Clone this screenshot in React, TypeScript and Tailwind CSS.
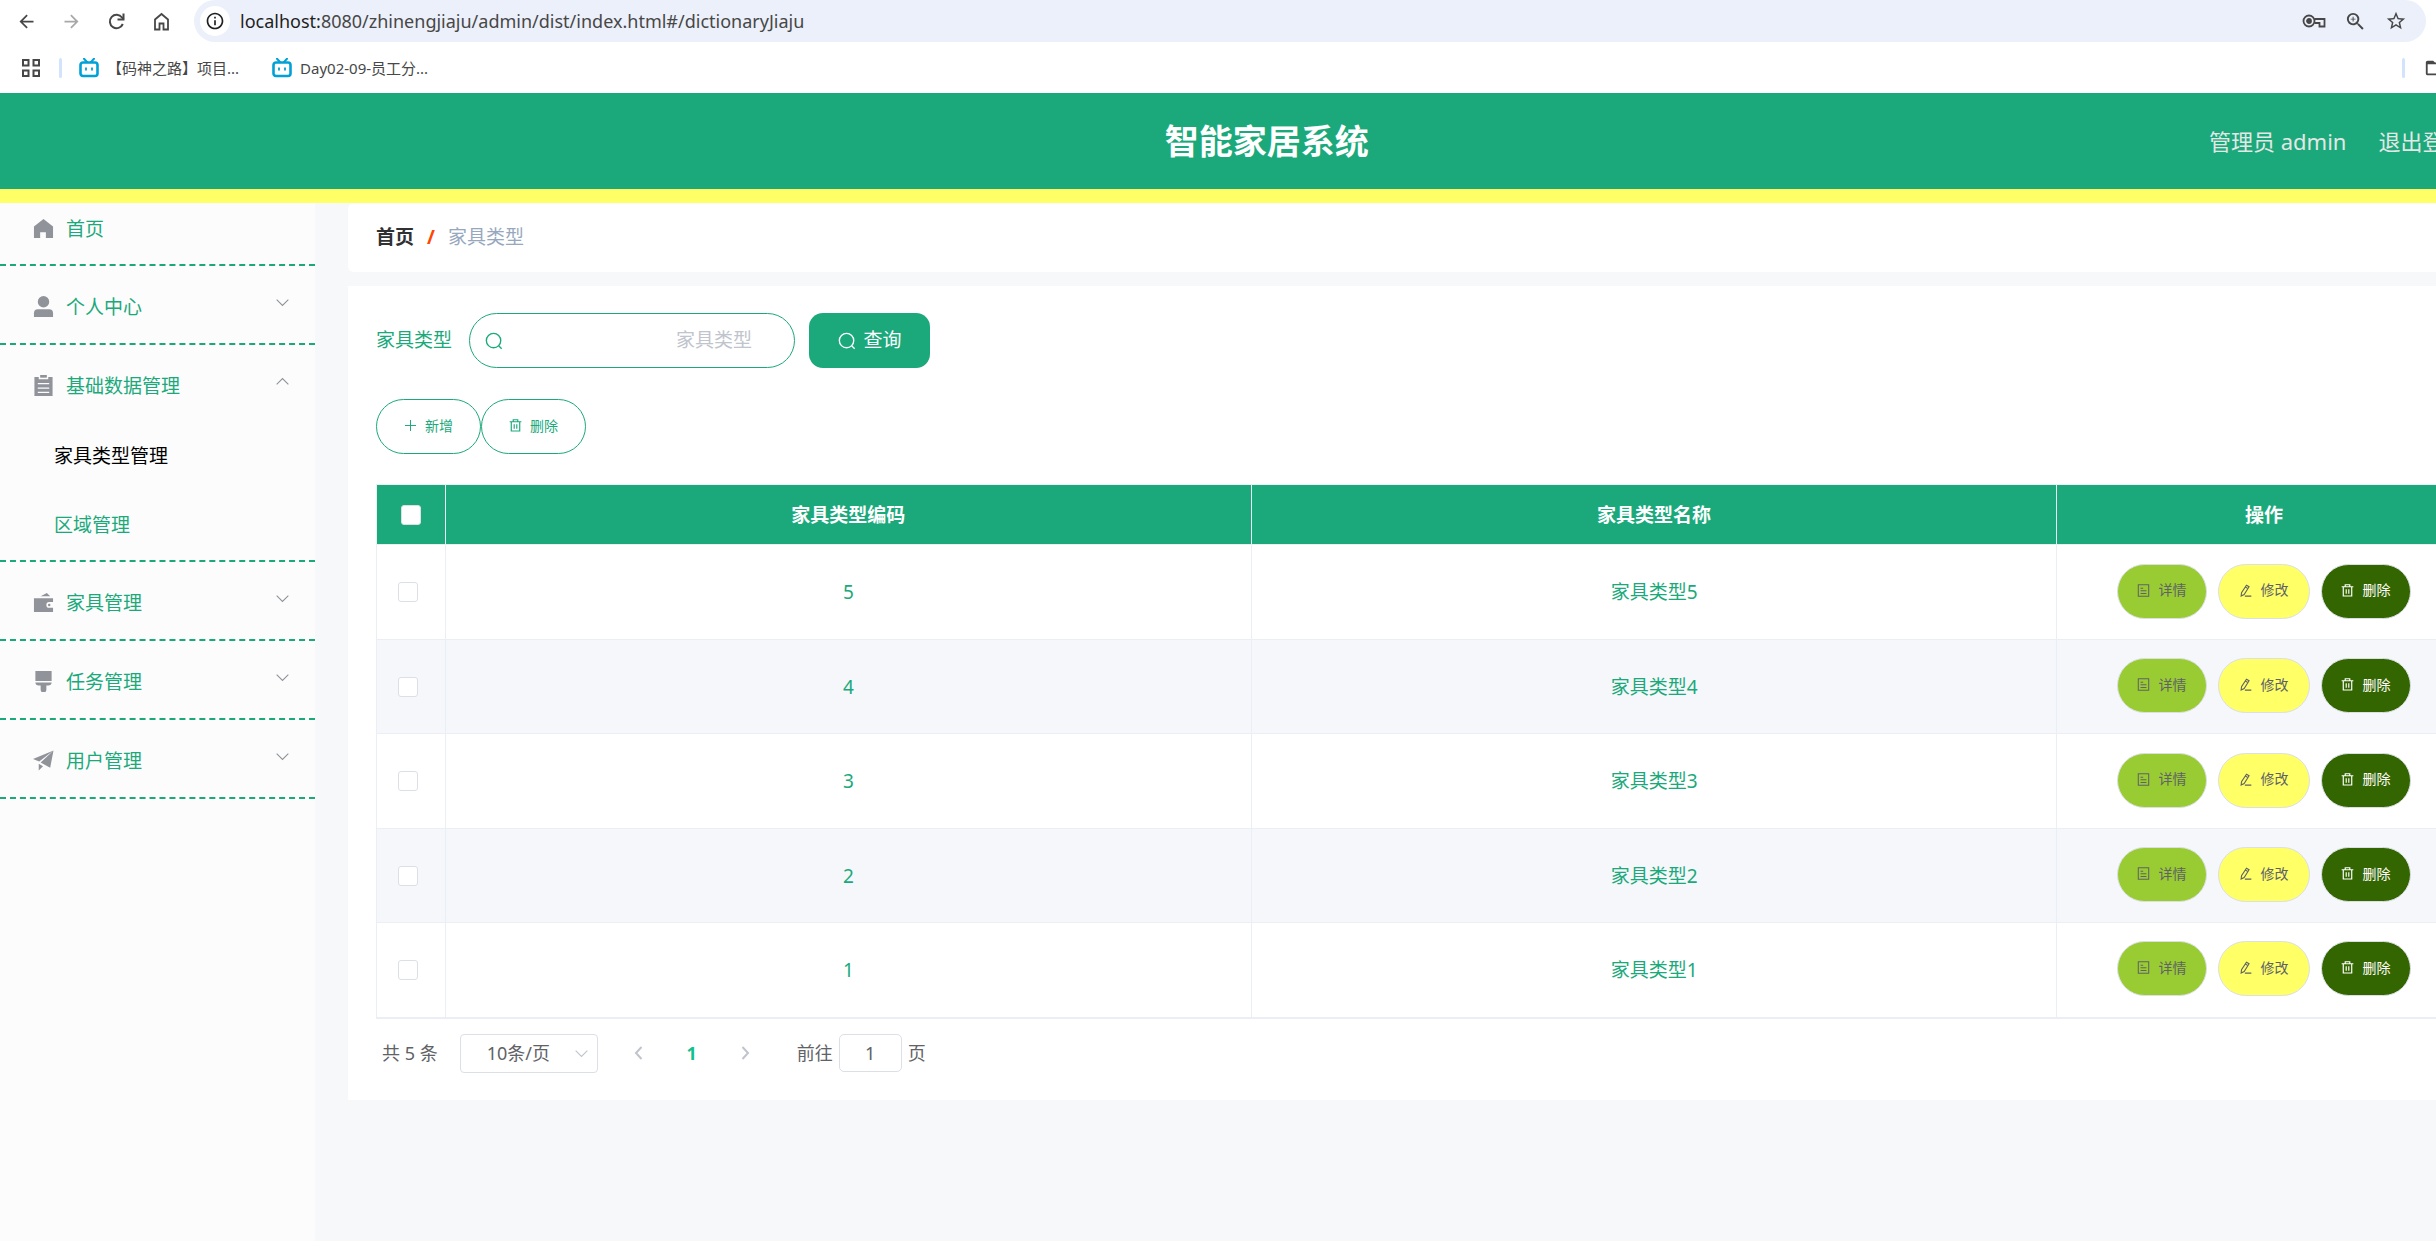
import { useState, type ReactNode } from 'react';
import {
  MdArrowBack,
  MdArrowForward,
  MdFolderOpen,
  MdInfoOutline,
  MdStarBorder,
  MdZoomIn,
} from 'react-icons/md';

/* ---------- icons ---------- */

type IconProps = { className?: string };

function Stroke({ className, children }: IconProps & { children: ReactNode }) {
  return (
    <svg
      viewBox="0 0 20 20"
      className={className}
      fill="none"
      stroke="currentColor"
      strokeWidth="1.5"
      aria-hidden="true"
    >
      {children}
    </svg>
  );
}

function Solid({ className, children }: IconProps & { children: ReactNode }) {
  return (
    <svg viewBox="0 0 22 22" className={className} fill="currentColor" aria-hidden="true">
      {children}
    </svg>
  );
}

const SearchIcon = ({ className }: IconProps) => (
  <Stroke className={className}>
    <circle cx="9.5" cy="9.5" r="8" />
    <path d="M15.2 15.2l3.3 3.3" />
  </Stroke>
);

const PlusIcon = ({ className }: IconProps) => (
  <Stroke className={className}>
    <path d="M10 1.5v17M1.5 10h17" />
  </Stroke>
);

const TrashIcon = ({ className }: IconProps) => (
  <Stroke className={className}>
    <path d="M1 4.2h18M6.5 4V1.2h7V4M3.5 4.5v14h13v-14M8 8v7M12 8v7" strokeWidth="1.8" />
  </Stroke>
);

const DocIcon = ({ className }: IconProps) => (
  <Stroke className={className}>
    <path d="M2 1h16v18H2zM5.5 6.5h4M5.5 10.5h9M5.5 14.5h9" strokeWidth="1.6" />
  </Stroke>
);

const EditIcon = ({ className }: IconProps) => (
  <Stroke className={className}>
    <path d="M11.5 1.8l4 2.4-7.6 12-4.6 2.3.6-5zM9.8 4.6l4 2.5M9 18.6h10" strokeWidth="1.7" />
  </Stroke>
);

const Chevron = ({ className }: IconProps) => (
  <Stroke className={className}>
    <path d="M1 5.5l9 9 9-9" strokeWidth="1.7" />
  </Stroke>
);

const HomeSolid = ({ className }: IconProps) => (
  <Solid className={className}>
    <path d="M11 1L1 9v12h6.5v-6h6v6H21V9z" />
  </Solid>
);

const UserSolid = ({ className }: IconProps) => (
  <Solid className={className}>
    <circle cx="11" cy="6" r="6" />
    <path d="M1 22v-4a4 4 0 0 1 4-4h12a4 4 0 0 1 4 4v4z" />
  </Solid>
);

const OrderSolid = ({ className }: IconProps) => (
  <Solid className={className}>
    <path fillRule="evenodd" d="M1.500 2H6v2.500h10V2h4.500v20h-19zM5 8.500v1.300h12V8.500zM5 13v1.300h12V13zM5 17.500v1.300h12v-1.300z" />
    <path d="M7.500 0h7v2.800h-7z" />
  </Solid>
);

const WalletSolid = ({ className }: IconProps) => (
  <Solid className={className}>
    <path d="M8 4.500L14.500 1l3.500 3.500z" />
    <path fillRule="evenodd" d="M1 6.500h20v4h-4a3 3 0 0 0 0 6h4V21H1z" />
    <circle cx="17" cy="13.500" r="1.300" />
  </Solid>
);

const BrushSolid = ({ className }: IconProps) => (
  <Solid className={className}>
    <path d="M2.500 0h17v10.500h-17zM2.500 12h17c0 2-1.500 3.200-3.500 3.200h-2V19.500a3 3 0 0 1-6 0v-4.300H6c-2 0-3.500-1.200-3.500-3.200z" />
  </Solid>
);

const PlaneSolid = ({ className }: IconProps) => (
  <Solid className={className}>
    <path d="M0 9.500L21.500 0.500 6.500 12zM21.500 0.500L18 18.500 8 13.200zM6 14.500l4.500 2.500L6 21.500z" />
  </Solid>
);

const BiliIcon = () => (
  <svg viewBox="0 0 20 20" className="size-5 text-[#00a1d6]" fill="none" stroke="currentColor" aria-hidden="true">
    <rect x="1.500" y="4.500" width="17" height="13.500" rx="2.500" strokeWidth="2.600" />
    <path d="M5 .8l3 3.200M15 .8l-3 3.200" strokeWidth="2" strokeLinecap="round" />
    <path d="M7 9.500v3M13 9.500v3" strokeWidth="1.800" />
  </svg>
);

/* ---------- browser chrome ---------- */

const bookmarks = ['【码神之路】项目...', 'Day02-09-员工分...'];

function BrowserBar() {
  return (
    <div className="bg-white text-[#474747]">
      <div className="flex h-[42px] items-center pl-4">
        <button type="button" aria-label="后退" className="mr-6">
          <MdArrowBack className="size-[21px]" />
        </button>
        <button type="button" aria-label="前进" className="mr-6 text-[#a8a8a8]">
          <MdArrowForward className="size-[21px]" />
        </button>
        <button type="button" aria-label="刷新" className="mr-6">
          <svg viewBox="0 0 21 21" className="size-[21px]" fill="none" stroke="currentColor" strokeWidth="2">
            <path d="M16.800 13a6.700 6.700 0 1 1-.8-6.500l1.500 1.800" />
            <path d="M17.500 2.500v6h-6" />
          </svg>
        </button>
        <button type="button" aria-label="主页" className="mr-[22px]">
          <svg viewBox="0 0 21 21" className="size-[21px]" fill="none" stroke="currentColor" strokeWidth="1.800">
            <path d="M4 18.500V8.500l6.500-5.500 6.500 5.500v10h-4.500V12.500h-4v6z" />
          </svg>
        </button>
        <div className="mr-[107px] flex h-full flex-1 items-center rounded-full bg-[#ecf0fa] pl-[6px] pr-[19px]">
          <span className="flex size-[30px] items-center justify-center rounded-full bg-white">
            <MdInfoOutline className="size-5 text-[#1f1f1f]" />
          </span>
          <a href="#/dictionaryJiaju" className="ml-[10px] flex-1 text-[18px] leading-6">
            <span className="text-[#1f1f1f]">localhost:</span>8080/zhinengjiaju/admin/dist/index.html#/dictionaryJiaju
          </a>
          <svg viewBox="0 0 24 16" className="mr-[18px] h-4 w-6" fill="none" stroke="currentColor" strokeWidth="1.800">
            <circle cx="7" cy="8" r="5.500" />
            <circle cx="7" cy="8" r="2" fill="currentColor" />
            <path d="M12.500 6H22.500v7.500h-5V10h-5" />
          </svg>
          <MdZoomIn className="mr-[18px] size-[23px]" />
          <MdStarBorder className="size-[22px]" />
        </div>
      </div>
      <div className="flex h-[51px] items-center pl-[22px] pr-[87px]">
        <svg viewBox="0 0 18 18" className="size-[18px]" fill="none" stroke="currentColor" strokeWidth="2">
          <path d="M1 1h5.500v5.500H1zM11.500 1H17v5.500h-5.500zM1 11.500h5.500V17H1zM11.500 11.500H17V17h-5.500z" />
        </svg>
        <span className="ml-[19px] mr-[17px] h-5 w-[3px] rounded-sm bg-[#d3e3fd]" />
        {bookmarks.map((title) => (
          <a key={title} href="#/bookmark" className="mr-[33px] flex items-center gap-2 text-[15px] leading-5">
            <BiliIcon />
            {title}
          </a>
        ))}
        <span className="ml-auto mr-[19px] h-5 w-[3px] rounded-sm bg-[#d3e3fd]" />
        <MdFolderOpen className="size-[22px]" />
      </div>
    </div>
  );
}

/* ---------- sidebar ---------- */

type MenuItem = {
  label: string;
  Icon: (props: IconProps) => ReactNode;
  children?: string[];
  leaf?: boolean;
};

const menu: MenuItem[] = [
  { label: '首页', Icon: HomeSolid, leaf: true },
  { label: '个人中心', Icon: UserSolid },
  { label: '基础数据管理', Icon: OrderSolid, children: ['家具类型管理', '区域管理'] },
  { label: '家具管理', Icon: WalletSolid },
  { label: '任务管理', Icon: BrushSolid },
  { label: '用户管理', Icon: PlaneSolid },
];

function Sidebar() {
  return (
    <nav className="w-[315px] shrink-0 bg-[#fcfcfc] text-[19px] text-[#1ba97b]">
      <ul>
        {menu.map(({ label, Icon, children, leaf }) => (
          <li key={label} className="border-b-2 border-dashed border-[#1ba97b]">
            <button
              type="button"
              className={`flex w-full items-center pl-[33px] pr-[26px] ${leaf ? 'h-[61px] pb-[10px]' : 'h-[77px] pt-1'}`}
            >
              <Icon className="mr-3 size-[21px] text-[#909399]" />
              <span className="pt-0.5">{label}</span>
              {!leaf && (
                <Chevron className={`mb-2 ml-auto size-[13px] text-[#909399] ${children ? 'rotate-180' : ''}`} />
              )}
            </button>
            {children?.map((child, i) => (
              <a
                key={child}
                href={`#/${child}`}
                className={`flex h-[69px] items-center pl-[54px] ${i === 0 ? 'text-black' : ''}`}
              >
                {child}
              </a>
            ))}
          </li>
        ))}
      </ul>
    </nav>
  );
}

/* ---------- content ---------- */

const rows = [5, 4, 3, 2, 1];

const checkboxClass =
  'block size-5 appearance-none rounded-[3px] border border-[#dcdfe6] bg-white checked:bg-[#1ba97b]';
const pillClass = 'flex h-[55px] items-center justify-center rounded-full border pb-0.5 text-[14px]';

function TypeTable() {
  return (
    <table className="w-full table-fixed border-collapse border border-b-2 border-[#ebeef5] text-center text-[19px] leading-6">
      <colgroup>
        <col className="w-[69px]" />
        <col />
        <col />
        <col className="w-[414px]" />
      </colgroup>
      <thead>
        <tr className="h-[60px] bg-[#1ba97b] text-white">
          <th className="border border-[#ebeef5]">
            <input type="checkbox" aria-label="全选" className={`${checkboxClass} mx-auto`} />
          </th>
          <th className="border border-[#ebeef5] font-bold">家具类型编码</th>
          <th className="border border-[#ebeef5] font-bold">家具类型名称</th>
          <th className="border border-[#ebeef5] font-bold">操作</th>
        </tr>
      </thead>
      <tbody className="text-[#1ba97b]">
        {rows.map((n) => (
          <tr key={n} className="odd:h-[95px] even:h-[94px] even:bg-[#f5f7fa]">
            <td className="border border-[#ebeef5] pl-[21px]">
              <input type="checkbox" aria-label={`选择家具类型${n}`} className={checkboxClass} />
            </td>
            <td className="border border-[#ebeef5]">{n}</td>
            <td className="border border-[#ebeef5]">家具类型{n}</td>
            <td className="border border-[#ebeef5] pb-0.5">
              <div className="flex justify-center gap-[11px]">
                <button type="button" className={`${pillClass} w-[90px] gap-2 border-[#dcdfe6] bg-[#99cc33] text-[#606266]`}>
                  <DocIcon className="size-[13px]" />
                  详情
                </button>
                <button type="button" className={`${pillClass} w-[92px] gap-2 border-[#dcdfe6] bg-[#ffff66] text-[#606266]`}>
                  <EditIcon className="size-[13px]" />
                  修改
                </button>
                <button type="button" className={`${pillClass} w-[90px] gap-2 border-[#dcdfe6] bg-[#336600] text-white`}>
                  <TrashIcon className="size-[13px]" />
                  删除
                </button>
              </div>
            </td>
          </tr>
        ))}
      </tbody>
    </table>
  );
}

function Pagination() {
  return (
    <div className="flex items-center pl-[6px] pt-[15px] text-[18px] leading-6 text-[#606266]">
      <span className="mr-[22px]">共 5 条</span>
      <div className="relative mr-[34px] h-[39px] w-[138px]">
        <select
          aria-label="每页条数"
          defaultValue="10"
          className="size-full appearance-none rounded-[4px] border border-[#dcdfe6] bg-white pl-[26px]"
        >
          <option value="10">10条/页</option>
        </select>
        <Chevron className="pointer-events-none absolute right-[10px] top-[13px] size-[13px] text-[#c0c4cc]" />
      </div>
      <button type="button" aria-label="上一页" className="text-[#c0c4cc]">
        <svg viewBox="0 0 14 14" className="size-[14px]" fill="none" stroke="currentColor" strokeWidth="2">
          <path d="M9.500 1L4 7l5.500 6" />
        </svg>
      </button>
      <button type="button" className="mx-[39px] w-[14px] font-bold text-[#10c090]">
        1
      </button>
      <button type="button" aria-label="下一页" className="text-[#c0c4cc]">
        <svg viewBox="0 0 14 14" className="size-[14px]" fill="none" stroke="currentColor" strokeWidth="2">
          <path d="M4.500 1L10 7l-5.500 6" />
        </svg>
      </button>
      <label htmlFor="page" className="ml-[45px]">
        前往
      </label>
      <input
        id="page"
        defaultValue="1"
        className="mx-[6px] h-[38px] w-[63px] rounded-[5px] border border-[#dcdfe6] text-center"
      />
      <span>页</span>
    </div>
  );
}

export default function App() {
  const [keyword, setKeyword] = useState('');

  return (
    <div className="min-h-screen overflow-hidden bg-[#f7f8fa] font-['Noto_Sans','Noto_Sans_CJK_SC',sans-serif]">
      {/* the app is a little wider than the window */}
      <div className="flex min-h-screen w-[104%] flex-col">
        <BrowserBar />

        <header className="grid h-[110px] grid-cols-[1fr_auto_1fr] items-center border-b-[14px] border-[#ffff66] bg-[#1ba97b]">
          <h1 className="col-start-2 text-[34px] font-bold leading-10 text-white">智能家居系统</h1>
          <div className="flex justify-end gap-8 pr-[67px] text-[22px] leading-7 text-[#e4e7e6]">
            <span>管理员 admin</span>
            <button type="button">退出登录</button>
          </div>
        </header>

        <div className="flex flex-1">
          <Sidebar />

          <main className="flex-1 pl-[33px] pr-[34px]">
            <div className="flex h-[69px] items-center rounded-md bg-white px-7 text-[19px]">
              <a href="#/" className="font-bold text-[#303133]">
                首页
              </a>
              <span className="mx-[13px] font-bold text-[#ff4500]">/</span>
              <span className="text-[#97a8be]">家具类型</span>
            </div>

            <section className="mt-[14px] bg-white px-7 pb-[27px] pt-[27px]">
              <form className="flex items-center text-[19px] text-[#1ba97b]" onSubmit={(e) => e.preventDefault()}>
                <label htmlFor="keyword" className="mr-[17px]">
                  家具类型
                </label>
                <div className="mr-[14px] flex h-[55px] w-[326px] items-center rounded-full border border-[#1ba97b] pl-[15px] pr-[42px]">
                  <SearchIcon className="size-[18px] shrink-0" />
                  <input
                    id="keyword"
                    value={keyword}
                    onChange={(e) => setKeyword(e.target.value)}
                    placeholder="家具类型"
                    className="w-full bg-transparent text-right outline-none placeholder:text-[#c0c4cc]"
                  />
                </div>
                <button
                  type="submit"
                  className="flex h-[55px] w-[121px] items-center justify-center gap-2 rounded-[14px] bg-[#1ba97b] text-white"
                >
                  <SearchIcon className="size-[18px]" />
                  查询
                </button>
              </form>

              <div className="mb-[30px] mt-[31px] flex text-[#1ba97b]">
                <button type="button" className={`${pillClass} w-[105px] gap-2 border-[#1ba97b]`}>
                  <PlusIcon className="size-[13px]" />
                  新增
                </button>
                <button type="button" className={`${pillClass} w-[105px] gap-2 border-[#1ba97b]`}>
                  <TrashIcon className="size-[13px]" />
                  删除
                </button>
              </div>

              <TypeTable />
              <Pagination />
            </section>
          </main>
        </div>
      </div>
    </div>
  );
}
